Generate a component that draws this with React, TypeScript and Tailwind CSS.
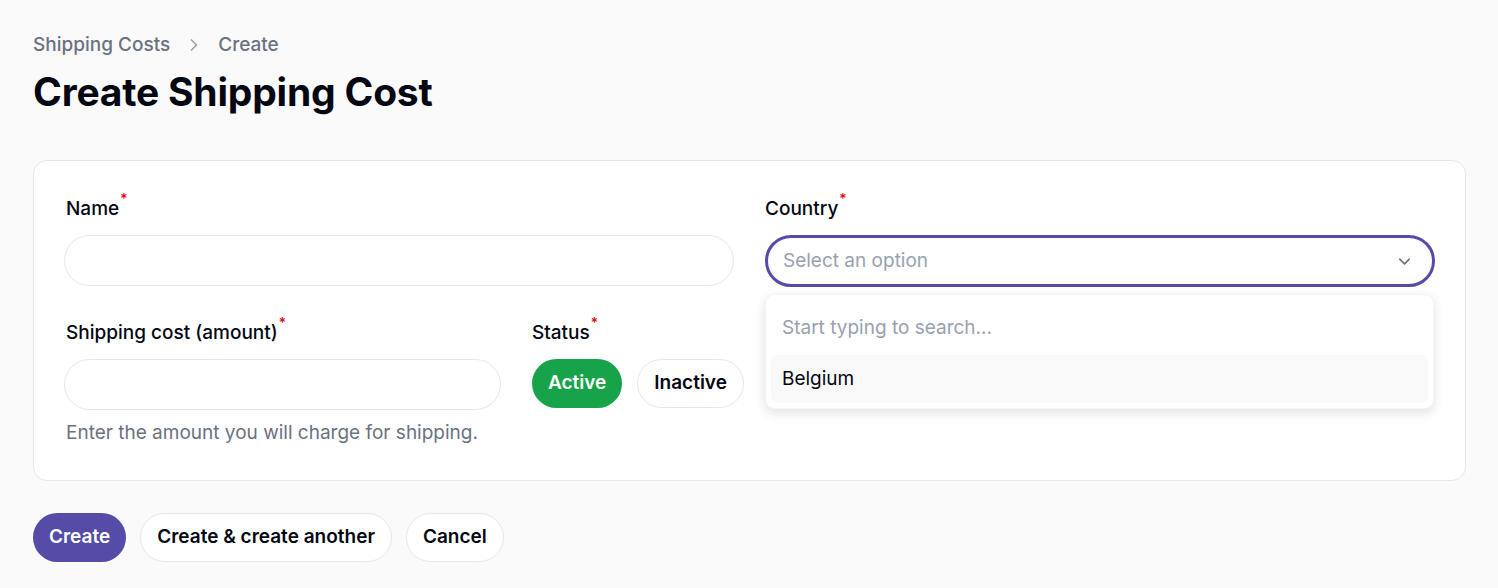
import { ChevronDown, ChevronRight } from "lucide-react";

function Label({ text, indent = true }: { text: string; indent?: boolean }) {
  return (
    <label
      className={
        indent
          ? "flex items-start pl-[2px] text-[19px] leading-[27px] font-medium text-gray-950"
          : "flex items-start text-[19px] leading-[27px] font-medium text-gray-950"
      }
    >
      {text}
      <span className="ml-[1px] mt-[-3px] text-[14px] leading-[14px] font-medium text-red-600">*</span>
    </label>
  );
}

export default function App() {
  return (
    <main
      className="min-h-screen w-full bg-[#fafafa] pl-[33px] pr-[32px] pt-[31px] pb-[28px]"
      style={{ fontFamily: "Inter, 'Noto Sans', sans-serif" }}
    >
      <nav className="flex items-center gap-[14px] text-[19px] leading-[27px] font-medium text-gray-500">
        <span>Shipping Costs</span>
        <ChevronRight className="h-[20px] w-[20px] text-gray-400" strokeWidth={2} />
        <span>Create</span>
      </nav>
      <h1 className="mt-[11px] text-[39px] leading-[45px] font-bold tracking-[-0.2px] text-gray-950">
        Create Shipping Cost
      </h1>

      <section className="mt-[46px] rounded-[14px] border border-gray-200 bg-white px-[30px] pt-[34px] pb-[34px]">
        <div className="grid grid-cols-2 gap-x-[31px] gap-y-[32px]">
          <div className="flex flex-col gap-[13px]">
            <Label text="Name" />
            <input className="h-[51px] w-full rounded-full border border-gray-200 bg-white px-4 outline-none" />
          </div>

          <div className="relative flex flex-col gap-[13px]">
            <Label text="Country" indent={false} />
            <button className="flex h-[52px] w-full items-center justify-between rounded-full border-[3px] border-[#544ca6] bg-white pl-[15px] pr-[18px] text-[19px] text-gray-400">
              <span>Select an option</span>
              <ChevronDown className="h-[19px] w-[19px] text-gray-500" strokeWidth={2} />
            </button>
            <div className="absolute left-0 right-[1px] top-full z-10 mt-[7px] rounded-[9px] border border-gray-100 bg-white p-[5px] shadow-[0_4px_12px_rgba(0,0,0,0.12)]">
              <div className="px-[11px] pt-[14px] pb-[14px] text-[19px] leading-[27px] text-gray-400">
                Start typing to search...
              </div>
              <div className="rounded-[7px] bg-[#f9f9f9] px-[11px] py-[10px] text-[19px] leading-[28px] text-gray-950">
                Belgium
              </div>
            </div>
          </div>

          <div className="grid grid-cols-[437px_1fr] gap-x-[31px]">
            <div className="flex flex-col gap-[13px]">
              <Label text="Shipping cost (amount)" />
              <div className="flex flex-col gap-[9px]">
                <input className="h-[51px] w-full rounded-full border border-gray-200 bg-white px-4 outline-none" />
                <p className="pl-[2px] text-[19px] leading-[27px] text-gray-500">
                  Enter the amount you will charge for shipping.
                </p>
              </div>
            </div>
            <div className="flex flex-col gap-[13px]">
              <Label text="Status" indent={false} />
              <div className="flex gap-[15px]">
                <button className="h-[49px] shrink-0 rounded-full bg-[#17a34a] px-[16px] text-[19px] font-semibold text-white">
                  Active
                </button>
                <button className="h-[49px] shrink-0 rounded-full border border-gray-200 bg-white px-[16px] text-[19px] font-semibold text-gray-950">
                  Inactive
                </button>
              </div>
            </div>
          </div>
        </div>
      </section>

      <div className="mt-[32px] flex gap-[14px]">
        <button className="h-[49px] rounded-full bg-[#544ca6] px-[16px] text-[19px] font-semibold text-white">
          Create
        </button>
        <button className="h-[49px] rounded-full border border-gray-200 bg-white px-[16px] text-[19px] font-semibold text-gray-950">
          Create &amp; create another
        </button>
        <button className="h-[49px] rounded-full border border-gray-200 bg-white px-[16px] text-[19px] font-semibold text-gray-950">
          Cancel
        </button>
      </div>
    </main>
  );
}
